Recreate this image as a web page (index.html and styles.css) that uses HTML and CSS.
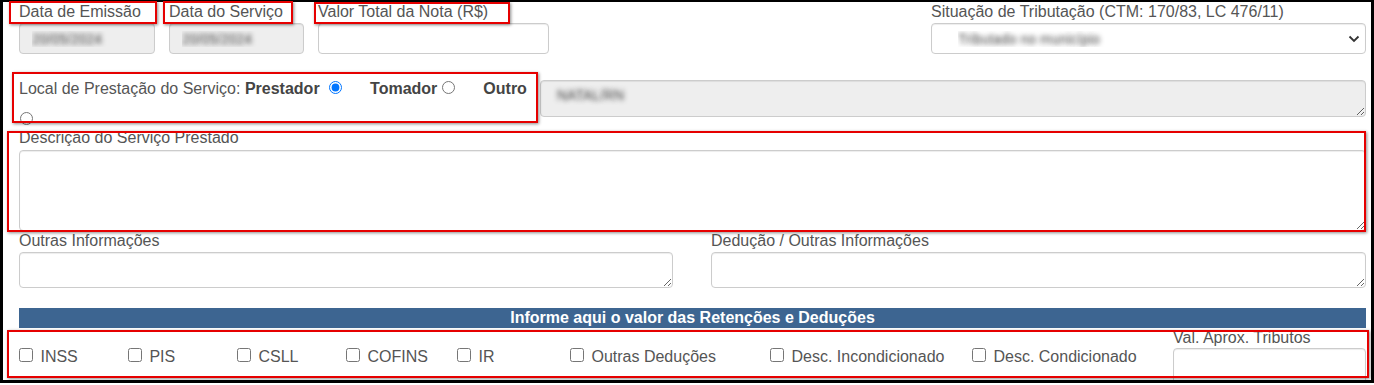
FILE: index.html
```html
<!DOCTYPE html>
<html lang="pt-BR">
<head>
  <meta charset="UTF-8" />
  <title>Emissão de Nota</title>
  <link rel="stylesheet" href="styles.css">
</head>
<body>
  <div class="frame">
    <div class="form">
      <!-- linha 1: datas, valor e situação -->
      <div class="row-top">
        <div class="field f-emissao">
          <label>Data de Emissão</label>
          <input class="ctl ctl-off blur" readonly value="20/05/2024">
        </div>
        <div class="field f-servico">
          <label>Data do Serviço</label>
          <input class="ctl ctl-off blur" readonly value="20/05/2024">
        </div>
        <div class="field f-valor">
          <label>Valor Total da Nota (R$)</label>
          <input class="ctl">
        </div>
        <div class="field f-situacao">
          <label>Situação de Tributação (CTM: 170/83, LC 476/11)</label>
          <div class="select-wrap">
            <select class="ctl blur">
              <option>Tributado no município</option>
            </select>
            <svg class="chevron" width="12" height="8" viewBox="0 0 12 8">
              <polyline points="1.5,1.5 6,6 10.5,1.5" fill="none" stroke="#333" stroke-width="1.8"/>
            </svg>
          </div>
        </div>
      </div>

      <!-- linha 2: local de prestação -->
      <div class="row-local">
        <div class="local">Local de Prestação do Serviço: <b>Prestador</b> <input type="radio" name="local" checked><b class="opt">Tomador</b><input type="radio" name="local"><b class="opt">Outro</b> <input type="radio" name="local" class="r-last"></div>
        <textarea class="ctl ctl-off blur ta-local" readonly>NATAL/RN</textarea>
      </div>

      <div class="field f-desc">
        <label>Descrição do Serviço Prestado</label>
        <textarea class="ctl ta-desc"></textarea>
      </div>

      <div class="row-info">
        <div class="field">
          <label>Outras Informações</label>
          <textarea class="ctl ta-info"></textarea>
        </div>
        <div class="field">
          <label>Dedução / Outras Informações</label>
          <textarea class="ctl ta-info"></textarea>
        </div>
      </div>

      <div class="bar">Informe aqui o valor das Retenções e Deduções</div>

      <!-- retenções -->
      <div class="row-ret">
        <label class="chk"><input type="checkbox"> INSS</label>
        <label class="chk"><input type="checkbox"> PIS</label>
        <label class="chk"><input type="checkbox"> CSLL</label>
        <label class="chk"><input type="checkbox"> COFINS</label>
        <label class="chk"><input type="checkbox"> IR</label>
        <label class="chk"><input type="checkbox"> Outras Deduções</label>
        <label class="chk"><input type="checkbox"> Desc. Incondicionado</label>
        <label class="chk"><input type="checkbox"> Desc. Condicionado</label>
        <div class="field f-aprox">
          <label>Val. Aprox. Tributos</label>
          <input class="ctl ctl-tall">
        </div>
      </div>
    </div>

    <!-- marcações em vermelho -->
    <div class="mark m1"></div>
    <div class="mark m2"></div>
    <div class="mark m3"></div>
    <div class="mark m4"></div>
    <div class="mark m5"></div>
    <div class="mark m6"></div>
  </div>
</body>
</html>
```

FILE: styles.css
```css
body {
  margin: 0;
  background: #fff;
  font-family: 'Liberation Sans', Arial, sans-serif;
  font-size: 16px;
  color: #555;
}
/* --- moldura --- */
.frame {
  position: relative;
  width: 1368px;
  height: 378px;
  border-top: 2px solid #000;
  border-left: 3px solid #000;
  border-right: 3px solid #000;
  border-bottom: 3px solid #000;
}
.form {
  height: 378px;
  overflow: hidden;
  padding: 0 5px 0 16px;
}
.field label {
  display: block;
  line-height: 20px;
  height: 21px;
  white-space: nowrap;
}
/* --- controles --- */
.ctl {
  display: block;
  width: 100%;
  box-sizing: border-box;
  height: 31px;
  margin: 0;
  padding: 4px 12px;
  border: 1px solid #ccc;
  border-radius: 4px;
  box-shadow: inset 0 1px 1px rgba(0,0,0,.075);
  background: #fff;
  font-family: 'Liberation Sans', Arial, sans-serif;
  font-size: 14px;
  color: #555;
  outline: none;
}
.ctl-off {
  background: #eee;
}
.blur {
  color: transparent;
  text-shadow: 0 0 5px rgba(60,60,60,.95);
}
textarea.ctl {
  resize: vertical;
}
/* --- linha 1 --- */
.row-top {
  display: flex;
  gap: 14px;
}
.f-emissao { width: 136px; }
.f-servico { width: 135px; }
.f-valor { width: 231px; }
.f-situacao {
  width: 435px;
  margin-left: auto;
}
.select-wrap {
  position: relative;
}
.select-wrap select {
  appearance: none;
  padding-left: 26px;
}
.chevron {
  position: absolute;
  right: 6px;
  top: 12px;
}
/* --- linha 2 --- */
.row-local {
  display: flex;
  margin-top: 19px;
  height: 55px;
}
.local {
  width: 521px;
  flex-shrink: 0;
  line-height: 31px;
}
.local b {
  color: #444;
}
.local input[type=radio] {
  margin: 3px 3px 0 5px;
}
.local .opt {
  margin-left: 25px;
}
.local input.r-last {
  margin-left: 1px;
}
.ta-local {
  flex: 1;
  height: 37px;
  margin-top: 7px;
  padding-left: 16px;
  padding-top: 6px;
}
/* --- descrição --- */
.f-desc label {
  height: 22px;
}
.ta-desc {
  height: 81px;
}
.row-info {
  display: grid;
  grid-template-columns: 654px 655px;
  column-gap: 38px;
}
.ta-info {
  height: 36px;
}
/* --- barra --- */
.bar {
  margin-top: 20px;
  height: 20px;
  line-height: 20px;
  background: #3d6591;
  color: #fff;
  font-weight: bold;
  text-align: center;
}
/* --- retenções --- */
.row-ret {
  display: grid;
  grid-template-columns: 109px 109px 109px 111px 113px 200px 202px 201px 193px;
  align-items: start;
}
.chk {
  margin-top: 17px;
  line-height: 20px;
  white-space: nowrap;
}
.chk input {
  width: 14px;
  height: 14px;
  margin: 3px 3px 3px 0;
}
.f-aprox label {
  height: 20px;
}
.field .ctl-tall {
  height: 36px;
}
/* --- marcações --- */
.mark {
  position: absolute;
  border: 2px solid #e60000;
  box-shadow: 1px 1px 3px rgba(0,0,0,.45);
  box-sizing: border-box;
}
.m1 { left: 6px; top: -1px; width: 148px; height: 23px; }
.m2 { left: 160px; top: -1px; width: 130px; height: 23px; }
.m3 { left: 311px; top: 0; width: 196px; height: 22px; }
.m4 { left: 9px; top: 70px; width: 526px; height: 51px; }
.m5 { left: 4px; top: 129px; width: 1359px; height: 101px; }
.m6 { left: 4px; top: 328px; width: 1362px; height: 48px; }
```
